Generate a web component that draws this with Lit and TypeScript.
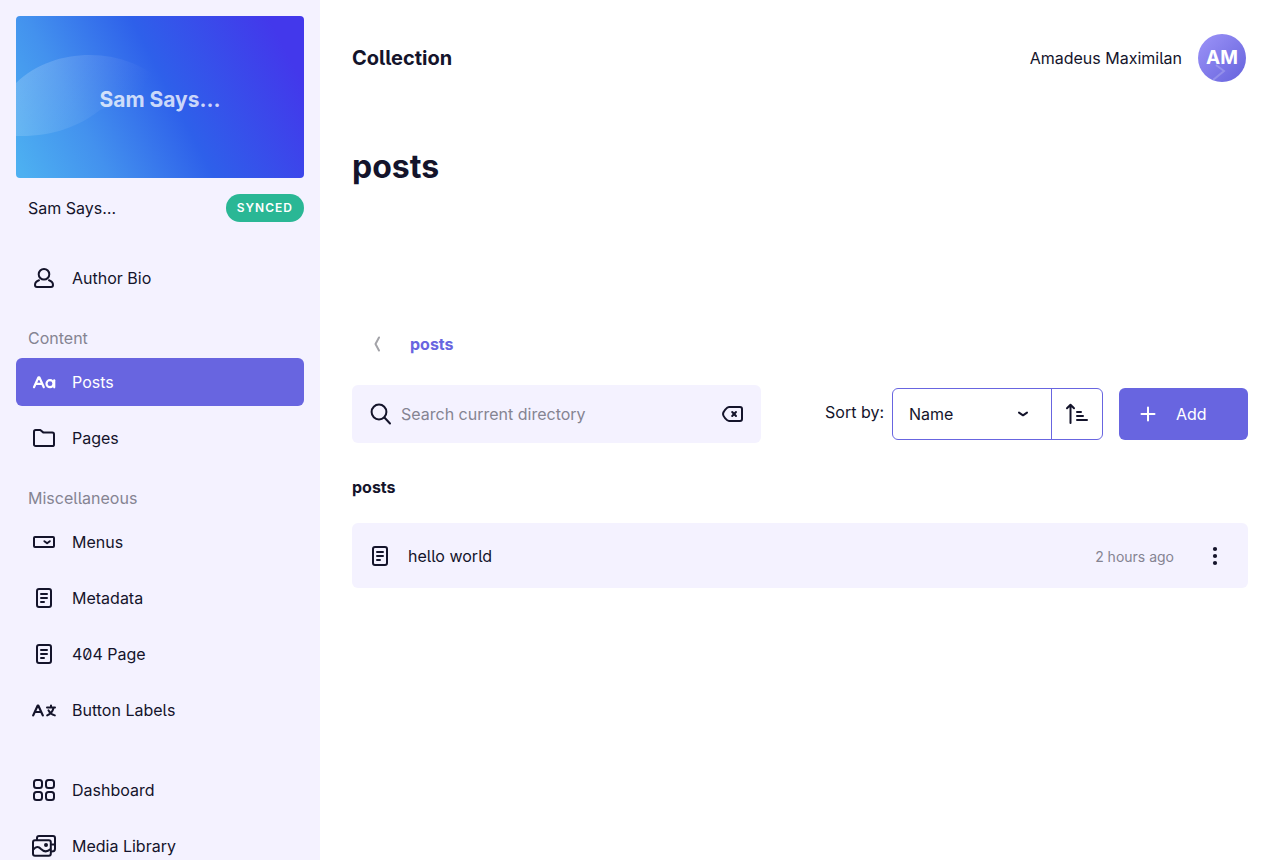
import { LitElement, html, css, svg } from "lit";
import { customElement } from "lit/decorators.js";

const icons: Record<string, unknown> = {
  author: svg`<circle cx="12" cy="8.200" r="5.300"/><path d="M7 14.200C4.600 15 3 16.900 3 19c0 1.300.7 2 2 2h14c1.300 0 2-.7 2-2 0-2.100-1.600-4-4-4.800"/>`,
  type: svg`<g stroke-width="2.200"><path d="M2 17.200 6.500 7.300h.8l4.500 9.900M3.700 13.900h6.400"/><circle cx="18" cy="13.700" r="3.500"/><path d="M22.200 10.300v7"/></g>`,
  folder: svg`<path d="M2 5.800C2 4.800 2.700 4 3.700 4h4.600l3.200 2.600h8.800c1 0 1.700.8 1.700 1.800v10c0 1-.7 1.700-1.700 1.700H3.700c-1 0-1.700-.8-1.700-1.700z"/>`,
  menu: svg`<rect x="2" y="7" width="20" height="10" rx="1"/><path d="m12.400 11.200 2.700 2 2.700-2"/>`,
  doc: svg`<rect x="5" y="3" width="14" height="18" rx="2"/><path d="M9 8h6M9 12h6M9 16h3"/>`,
  translate: svg`<g stroke-width="2.200"><path d="M1.200 17.400 5.600 7.700h.8l4.400 9.700M2.900 14h6.200"/></g><path d="M15 9.600h8M19 7.500v2M21.500 10c-.8 3.400-3 6-6.300 7.400M16.500 12.400c1.200 2.500 3.200 4.200 6.300 5"/>`,
  grid: svg`<rect x="2" y="2" width="8" height="8" rx="2.500"/><rect x="14" y="2" width="8" height="8" rx="2.500"/><rect x="2" y="14" width="8" height="8" rx="2.500"/><rect x="14" y="14" width="8" height="8" rx="2.500"/>`,
  media: svg`<rect x="1" y="6.200" width="17.800" height="15.500" rx="2"/><path d="M5 5.500V4c0-1.200.8-2 2-2h14c1.200 0 2 .8 2 2v11c0 1.500-1 2.500-3.500 2.500M1.500 15.500c2.500-3.200 5-3.200 7.500-.5 3 3 6 3.200 9.300.3M20 10.500h2"/><circle cx="14" cy="11" r="1" fill="currentColor"/>`,
  search: svg`<circle cx="11" cy="10" r="7.400"/><path d="m16.400 15.500 5.600 6"/>`,
  clear: svg`<path d="M8 5h11c1.200 0 2 .8 2 2v10c0 1.200-.8 2-2 2H8c-2 0-6-4.500-6-7s4-7 6-7zM11.200 10l3.800 4M15 10l-3.800 4"/>`,
  sort: svg`<path d="M5.500 21V3M2 6.200l3.500-3.400L9 6.200M12 10h4M12 14h6M12 18h10"/>`,
  plus: svg`<path d="M12 5.500v13M5.500 12h13"/>`,
  back: svg`<path d="m14 5.500-3.500 6.500 3.500 6.500"/>`,
  down: svg`<path d="m6 10 6 4 6-4"/>`,
  dots: svg`<g fill="currentColor" stroke="none"><circle cx="12" cy="5" r="2.100"/><circle cx="12" cy="12" r="2.100"/><circle cx="12" cy="19" r="2.100"/></g>`,
};

const icon = (name: string) =>
  html`<svg class="icon" viewBox="0 0 24 24" aria-hidden="true">${icons[name]}</svg>`;

type Item = [label: string, icon: string];
const groups: { title?: string; items: Item[] }[] = [
  { items: [["Author Bio", "author"]] },
  { title: "Content", items: [["Posts", "type"], ["Pages", "folder"]] },
  {
    title: "Miscellaneous",
    items: [["Menus", "menu"], ["Metadata", "doc"], ["404 Page", "doc"], ["Button Labels", "translate"]],
  },
  { items: [["Dashboard", "grid"], ["Media Library", "media"]] },
];

@customElement("app-root")
export class AppRoot extends LitElement {
  static styles = css`
    :host {
      display: flex;
      height: 100vh;
      overflow: hidden;
      font: 16px/24px Inter, sans-serif;
      font-feature-settings: "ss02";
      color: #14142b;
      background: #fff;
      --accent: #6865e0;
      --tint: #f4f2ff;
      --muted: #858492;
    }
    *, *::before, *::after { box-sizing: border-box; }
    h1, h2, h3, p, ul { margin: 0; padding: 0; }
    ul { list-style: none; }
    a { color: inherit; text-decoration: none; }
    button, input, select { font: inherit; font-feature-settings: inherit; color: inherit; margin: 0; border: 0; background: none; padding: 0; }
    .icon {
      display: block; width: 24px; height: 24px; flex: none; fill: none;
      stroke: currentColor; stroke-width: 2; stroke-linecap: round; stroke-linejoin: round;
    }
    .sidebar { width: 320px; flex: none; padding: 16px; background: var(--tint); overflow: hidden; }
    .cover { position: relative; height: 162px; border-radius: 4px; overflow: hidden; display: grid; place-items: center; }
    .art { position: absolute; inset: 0; width: 100%; height: 100%; }
    .cover-title { position: relative; padding-top: 6px; font-size: 21px; font-weight: 700; color: #ffffffbf; }
    .site { display: flex; justify-content: space-between; align-items: center; padding: 16px 0 16px 12px; margin-bottom: 16px; }
    .badge { background: #2ab795; color: #fff; border-radius: 14px; padding: 0 11px; font-size: 12px; line-height: 28px; font-weight: 600; letter-spacing: 1px; }
    .group { margin-bottom: 24px; }
    .group-title { font-weight: 400; font-size: 16px; line-height: 24px; color: var(--muted); padding: 0 12px; margin-bottom: 8px; }
    .items { display: grid; gap: 8px; }
    .item { display: flex; align-items: center; gap: 16px; height: 48px; padding: 0 16px; border-radius: 6px; }
    .active { background: var(--accent); color: #fff; }
    .last { margin-top: 32px; }
    .main { flex: 1; min-width: 0; padding: 32px; }
    .top { display: flex; justify-content: space-between; align-items: center; height: 52px; }
    .top-title { font-size: 20px; line-height: 32px; font-weight: 700; }
    .user { display: flex; align-items: center; gap: 16px; padding-right: 2px; }
    .avatar {
      width: 48px; height: 48px; border-radius: 50%; display: grid; place-items: center; color: #fff;
      font-weight: 700; font-size: 19px; background: linear-gradient(135deg, #9d94f8, #6562dc);
      position: relative; overflow: hidden;
    }
    .avatar-art { position: absolute; inset: 0; }
    .initials { position: relative; }
    .heading { margin-top: 60px; font-size: 32px; line-height: 46px; font-weight: 700; }
    .crumbs { display: flex; align-items: center; gap: 21px; margin-top: 130px; height: 48px; padding-left: 13px; font-weight: 700; color: var(--accent); }
    .back { color: #a3a3a8; width: 24px; }
    .tools { display: flex; align-items: center; margin-top: 17px; }
    .search { flex: 1; max-width: 409px; height: 58px; border-radius: 6px; background: var(--tint); display: flex; align-items: center; padding: 0 16px; gap: 9px; }
    .field { flex: 1; min-width: 0; outline: 0; }
    .field::placeholder { color: var(--muted); opacity: 1; }
    .sort { display: flex; align-items: center; gap: 8px; margin-left: auto; }
    .sort-label { padding-bottom: 4px; }
    .sort-box { display: flex; height: 52px; border: 1px solid var(--accent); border-radius: 6px; }
    .pick { position: relative; display: flex; align-items: center; }
    .select { appearance: none; width: 158px; height: 50px; padding: 0 16px; }
    .chevron { position: absolute; right: 20px; width: 16px; pointer-events: none; }
    .chevron .icon { width: 16px; height: 16px; stroke-width: 3; }
    .order { width: 51px; border-left: 1px solid var(--accent); display: grid; place-items: center; }
    .add { display: flex; align-items: center; gap: 16px; width: 129px; height: 52px; margin-left: 16px; padding: 0 17px; border-radius: 6px; background: var(--accent); color: #fff; text-align: left; }
    .folder { margin-top: 32px; font-size: 16px; line-height: 24px; font-weight: 700; }
    .row { display: flex; align-items: center; height: 65px; margin-top: 24px; padding: 0 21px 0 16px; border-radius: 6px; background: var(--tint); }
    .name { margin-left: 16px; flex: 1; }
    .time { font-size: 14px; padding-top: 2px; color: var(--muted); margin-right: 29px; }
  `;

  render() {
    return html`
      <aside class="sidebar">
        <div class="cover">
          <svg class="art" viewBox="0 0 288 162" preserveAspectRatio="none" aria-hidden="true">
            <defs>
              <linearGradient id="sky" gradientUnits="userSpaceOnUse" x1="8" y1="162" x2="280" y2="20">
                <stop offset="0" stop-color="#4db0f1"/><stop offset=".25" stop-color="#4391ee"/><stop offset=".55" stop-color="#2e60ea"/><stop offset=".95" stop-color="#4338eb"/>
              </linearGradient>
              <linearGradient id="leaf" gradientUnits="userSpaceOnUse" x1="0" y1="80" x2="100" y2="130">
                <stop offset="0" stop-color="#fff" stop-opacity=".18"/><stop offset="1" stop-color="#fff" stop-opacity="0"/>
              </linearGradient>
            </defs>
            <path fill="url(#sky)" d="M0 0h288v162H0z"/>
            <path fill="url(#leaf)" d="M0 67C20 48 46 39 74 39c30 0 56 11 78 31L84 94C62 111 36 121 0 120z"/>
          </svg>
          <span class="cover-title">Sam Says…</span>
        </div>
        <div class="site"><span>Sam Says…</span><span class="badge">SYNCED</span></div>
        <nav>
          ${groups.map(
            (g, i) => html`<section class="group ${i === 3 ? "last" : ""}">
              ${g.title ? html`<h3 class="group-title">${g.title}</h3>` : ""}
              <ul class="items">
                ${g.items.map(
                  ([label, name]) => html`<li><a class="item ${label === "Posts" ? "active" : ""}" href="#">${icon(name)}<span>${label}</span></a></li>`
                )}
              </ul>
            </section>`
          )}
        </nav>
      </aside>
      <main class="main">
        <header class="top">
          <h2 class="top-title">Collection</h2>
          <div class="user">
            <span>Amadeus Maximilan</span>
            <span class="avatar">
              <svg class="avatar-art" viewBox="0 0 48 48" aria-hidden="true"><path d="m18 31 8 6-11 9" fill="none" stroke="#fff" stroke-width="2" opacity=".2"/></svg>
              <span class="initials">AM</span>
            </span>
          </div>
        </header>
        <h1 class="heading">posts</h1>
        <nav class="crumbs" aria-label="Folder">
          <button class="back" aria-label="Back">${icon("back")}</button>
          <a href="#">posts</a>
        </nav>
        <div class="tools">
          <div class="search">
            ${icon("search")}
            <input class="field" type="text" aria-label="Search" placeholder="Search current directory" />
            <button aria-label="Clear search">${icon("clear")}</button>
          </div>
          <div class="sort">
            <label class="sort-label" for="sort">Sort by:</label>
            <div class="sort-box">
              <div class="pick">
                <select class="select" id="sort"><option>Name</option></select>
                <span class="chevron">${icon("down")}</span>
              </div>
              <button class="order" aria-label="Sort ascending">${icon("sort")}</button>
            </div>
          </div>
          <button class="add">${icon("plus")}<span>Add</span></button>
        </div>
        <h3 class="folder">posts</h3>
        <div class="row">
          ${icon("doc")}
          <a class="name" href="#">hello world</a>
          <span class="time">2 hours ago</span>
          <button aria-label="More actions">${icon("dots")}</button>
        </div>
      </main>
    `;
  }
}
